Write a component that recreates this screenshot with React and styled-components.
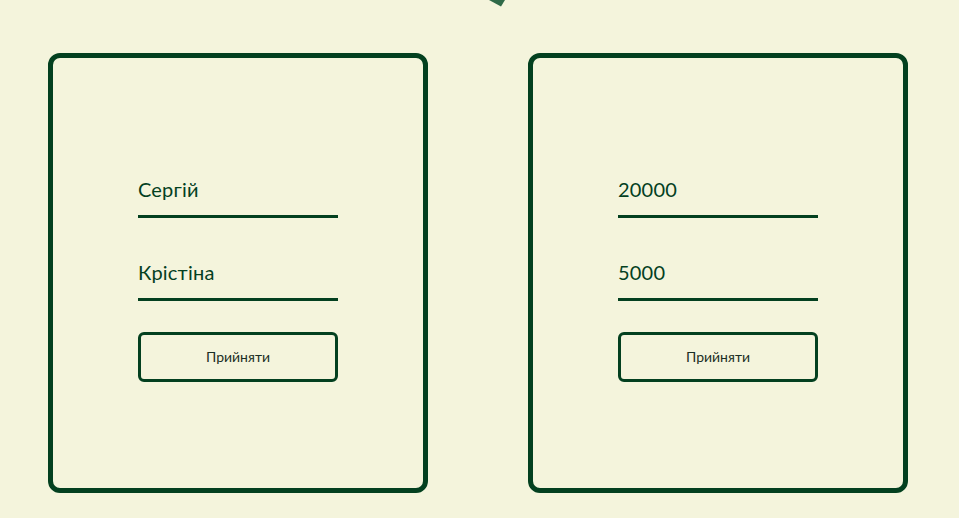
import React from 'react';
import styled, { createGlobalStyle } from 'styled-components';

const GlobalStyle = createGlobalStyle`
  html, body {
    margin: 0;
    padding: 0;
    background: #f4f4dc;
    font-family: 'Lato', 'Liberation Sans', sans-serif;
  }
`;

const Page = styled.div`
  position: relative;
  width: 959px;
  height: 518px;
  overflow: hidden;
  background: #f4f4dc;
`;

const Corner = styled.svg`
  position: absolute;
  top: 0;
  left: 486px;
`;

const Row = styled.div`
  display: flex;
  gap: 100px;
  padding: 53px 0 0 48px;
`;

const Card = styled.form`
  box-sizing: border-box;
  width: 380px;
  height: 440px;
  border: 5px solid #03401f;
  border-radius: 12px;
  display: flex;
  flex-direction: column;
  justify-content: center;
  padding: 3px 0 0 85px;
`;

const Field = styled.input`
  box-sizing: border-box;
  width: 200px;
  height: 50px;
  margin-bottom: ${(p) => p.$gap}px;
  padding: 0 0 5px;
  border: none;
  border-bottom: 3px solid #03401f;
  background: transparent;
  outline: none;
  font-family: 'Lato', 'Liberation Sans', sans-serif;
  font-size: 20px;
  letter-spacing: 0.2px;
  color: #03401f;
`;

const Button = styled.button`
  box-sizing: border-box;
  width: 200px;
  height: 50px;
  border: 3px solid #03401f;
  border-radius: 6px;
  background: transparent;
  font-family: 'Lato', 'Liberation Sans', sans-serif;
  font-size: 14px;
  color: #1a2e24;
  cursor: pointer;
`;

function Form({ first, second }) {
  return (
    <Card onSubmit={(e) => e.preventDefault()}>
      <Field defaultValue={first} $gap={33} />
      <Field defaultValue={second} $gap={31} />
      <Button type="submit">Прийняти</Button>
    </Card>
  );
}

export default function App() {
  return (
    <Page>
      <GlobalStyle />
      <Corner width="24" height="8" viewBox="0 0 24 8">
        <polygon points="3,0 19,0 15,6.5" fill="#2f6a48" />
      </Corner>
      <Row>
        <Form first="Сергій" second="Крістіна" />
        <Form first="20000" second="5000" />
      </Row>
    </Page>
  );
}
